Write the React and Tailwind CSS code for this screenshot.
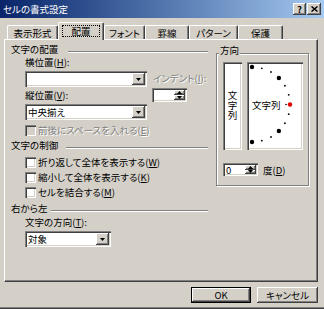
import React from 'react';

const raised = 'shadow-[inset_-1px_-1px_#404040,inset_1px_1px_#fff,inset_-2px_-2px_#808080]';
const sunken = 'shadow-[inset_1px_1px_#808080,inset_2px_2px_#404040,inset_-1px_-1px_#fff,inset_-2px_-2px_#d4d0c8]';
const gray = 'text-[#808080] [text-shadow:1px_1px_0_#fff]';

function DownArrow() {
  return (
    <svg width="5" height="3" viewBox="0 0 5 3">
      <path d="M0 0h5L2.5 3z" fill="#000" />
    </svg>
  );
}

function UpArrow() {
  return (
    <svg width="5" height="3" viewBox="0 0 5 3">
      <path d="M0 3h5L2.5 0z" fill="#000" />
    </svg>
  );
}

function Combo({ className, text }) {
  return (
    <div className={`h-[16px] bg-white p-[2px] flex ${sunken} ${className}`}>
      <span className="flex-1 leading-[12px] pl-[1px]">{text}</span>
      <div className={`w-[13px] bg-[#d4d0c8] flex items-center justify-center ${raised}`}>
        <DownArrow />
      </div>
    </div>
  );
}

function Spin({ className, text }) {
  return (
    <div className={`bg-white p-[2px] flex ${sunken} ${className}`}>
      <span className="flex-1 leading-[10px] pl-[1px]">{text}</span>
      <div className="w-[11px] flex flex-col">
        <div className={`flex-1 bg-[#d4d0c8] flex items-center justify-center ${raised}`}>
          <UpArrow />
        </div>
        <div className={`flex-1 bg-[#d4d0c8] flex items-center justify-center ${raised}`}>
          <DownArrow />
        </div>
      </div>
    </div>
  );
}

function Check({ children, disabled }) {
  return (
    <div className="h-[12px] ml-[14px] flex items-center">
      <div className={`w-[11px] h-[11px] ${disabled ? 'bg-[#d4d0c8]' : 'bg-white'} ${sunken}`} />
      <span className={`ml-[2px] leading-[12px] ${disabled ? gray : ''}`}>{children}</span>
    </div>
  );
}

function Heading({ children, className, lineClass }) {
  return (
    <div className={`h-[12px] flex items-center ${className}`}>
      <span className="leading-[12px]">{children}</span>
      <div className={`flex-1 mr-[1px] mt-[5px] border-t border-t-[#808080] border-b border-b-white ${lineClass}`} />
    </div>
  );
}

function Dial() {
  const dots = [];
  for (let a = -90; a <= 90; a += 15) {
    const r = (a * Math.PI) / 180;
    const x = 5 + 38 * Math.cos(r);
    const y = 42.5 - 37.5 * Math.sin(r);
    const big = a % 45 === 0;
    dots.push(
      <circle key={a} cx={x} cy={y} r={big ? 2.2 : 0.9} fill={a === 0 ? '#e00000' : '#000'} />
    );
  }
  return (
    <div className={`relative w-[56px] h-full bg-white ${sunken}`}>
      <svg className="absolute inset-0" width="56" height="88" viewBox="0 0 56 88">
        {dots}
        <circle cx="39" cy="42.5" r="0.8" fill="#000" />
      </svg>
      <div className="relative h-full flex items-center pl-[5px] pb-[2px]">
        <span className="leading-[12px]">文字列</span>
      </div>
    </div>
  );
}

const tabs = [
  { label: '表示形式', w: 'w-[51px]' },
  { label: '配置', w: 'w-[46px]', active: true },
  { label: 'フォント', w: 'w-[41px]' },
  { label: '罫線', w: 'w-[44px]' },
  { label: 'パターン', w: 'w-[49px]' },
  { label: '保護', w: 'w-[45px]' },
];

export default function App() {
  return (
    <div className="w-[324px] h-[309px] bg-[#d4d0c8] flex flex-col text-[9.5px] text-black font-['Noto_Sans_CJK_JP',sans-serif] [font-feature-settings:'palt'] shadow-[inset_0_-1px_#404040,inset_0_-2px_#808080]">
      {/* title bar */}
      <div className="h-[18px] bg-linear-to-r from-[#0a246a] to-[#a6caf0] flex items-center justify-between pl-[3px] pr-[3px]">
        <span className="text-white text-[9.5px] leading-[12px]">セルの書式設定</span>
        <div className="flex gap-[1px]">
          <div className={`w-[13px] h-[12px] bg-[#d4d0c8] flex items-center justify-center font-bold text-[9px] leading-[9px] ${raised}`}>?</div>
          <div className={`w-[14px] h-[12px] bg-[#d4d0c8] flex items-center justify-center ${raised}`}>
            <svg width="7" height="6" viewBox="0 0 7 6">
              <path d="M0.5 0.5l6 5M6.5 0.5l-6 5" stroke="#000" strokeWidth="1.5" />
            </svg>
          </div>
        </div>
      </div>

      {/* tabs */}
      <div className="mt-[4px] h-[18px] -mb-[1px] pl-[7px] flex items-end relative z-10">
        {tabs.map((t) =>
          t.active ? (
            <div
              key={t.label}
              className={`${t.w} h-[18px] bg-[#d4d0c8] border-t border-l border-white border-r border-r-[#404040] rounded-t-[2px] shadow-[inset_-1px_0_#808080] flex items-center justify-center pb-[1px]`}
            >
              <span className="border border-dotted border-black px-[8px] leading-[10px]">{t.label}</span>
            </div>
          ) : (
            <div
              key={t.label}
              className={`${t.w} h-[14px] mb-[1px] border-t border-l border-white border-r border-r-[#404040] rounded-t-[2px] shadow-[inset_-1px_0_#808080] flex items-center justify-center leading-[12px]`}
            >
              {t.label}
            </div>
          )
        )}
      </div>

      {/* panel */}
      <div className="ml-[4px] w-[314px] h-[243px] border border-t-white border-l-white border-r-[#404040] border-b-[#404040] shadow-[inset_-1px_-1px_#808080] pl-[6px] flex items-start">
        <div className="w-[198px] flex flex-col">
          <Heading className="mt-[3px]" lineClass="ml-[10px]">文字の配置</Heading>
          <div className="mt-[1px] ml-[14px] h-[12px] leading-[12px]">
            横位置(<u>H</u>):
          </div>
          <div className="mt-[3px] ml-[14px] flex items-start">
            <Combo className="w-[122px] shrink-0" text="" />
            <span className={`ml-[6px] mt-[1px] leading-[12px] ${gray}`}>
              インデント(<u>I</u>):
            </span>
          </div>
          <div className="mt-[1px] ml-[14px] h-[14px] flex items-center">
            <span className="w-[122px] shrink-0 leading-[12px]">
              縦位置(<u>V</u>):
            </span>
            <Spin className="ml-[5px] w-[35px] h-[14px]" text="" />
          </div>
          <Combo className="mt-[2px] ml-[14px] w-[122px]" text="中央揃え" />
          <div className="mt-[4px]">
            <Check disabled>
              前後にスペースを入れる(<u>E</u>)
            </Check>
          </div>
          <Heading className="mt-[3px]" lineClass="ml-[8px]">文字の制御</Heading>
          <div className="mt-[5px] flex flex-col gap-[3px]">
            <Check>
              折り返して全体を表示する(<u>W</u>)
            </Check>
            <Check>
              縮小して全体を表示する(<u>K</u>)
            </Check>
            <Check>
              セルを結合する(<u>M</u>)
            </Check>
          </div>
          <Heading className="mt-[4px]" lineClass="ml-[4px]">右から左</Heading>
          <div className="mt-[2px] ml-[14px] h-[12px] leading-[12px]">
            文字の方向(<u>T</u>):
          </div>
          <Combo className="mt-[3px] ml-[14px] w-[86px]" text="対象" />
        </div>

        {/* orientation group */}
        <div className="relative ml-[7px] mt-[13px] w-[93px] h-[133px] border border-[#808080] shadow-[1px_1px_0_#fff,inset_1px_1px_0_#fff]">
          <span className="absolute -top-[10px] left-[2px] px-[1px] bg-[#d4d0c8] leading-[12px]">方向</span>
          <div className="mt-[8px] ml-[6px] h-[88px] flex gap-[5px]">
            <div className={`w-[19px] h-full bg-white flex items-center justify-center ${sunken}`}>
              <span className="[writing-mode:vertical-rl] leading-[12px] tracking-[0.5px]">文字列</span>
            </div>
            <Dial />
          </div>
          <div className="mt-[13px] ml-[6px] flex items-center">
            <Spin className="w-[35px] h-[13px]" text="0" />
            <span className="ml-[5px] leading-[12px]">
              度(<u>D</u>)
            </span>
          </div>
        </div>
      </div>

      {/* buttons */}
      <div className="mt-[5px] pr-[6px] flex justify-end gap-[6px]">
        <div className="w-[60px] h-[16px] border border-black">
          <div className={`w-full h-full flex items-center justify-center leading-[12px] ${raised}`}>OK</div>
        </div>
        <div className={`w-[61px] h-[16px] flex items-center justify-center leading-[12px] ${raised}`}>キャンセル</div>
      </div>
    </div>
  );
}
